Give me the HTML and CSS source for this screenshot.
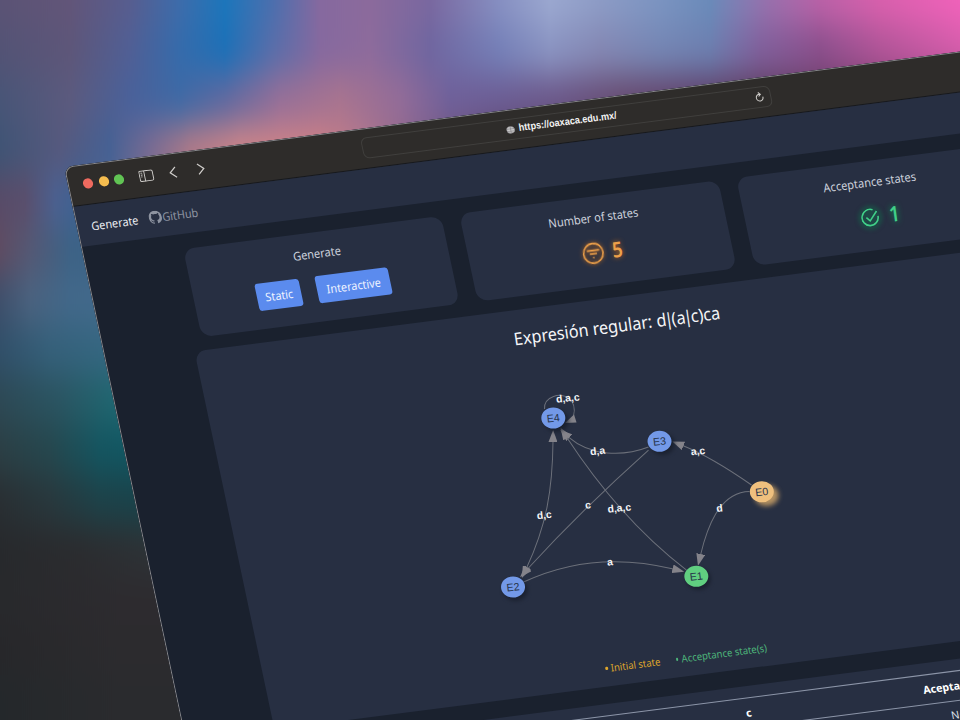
FILE: index.html
```html
<!DOCTYPE html>
<html lang="en">
<head>
<meta charset="utf-8">
<title>Generate</title>
<link rel="stylesheet" href="styles.css">
</head>
<body>
<svg class="filters" width="0" height="0"><filter id="soften" x="0" y="-10%" width="100%" height="120%" color-interpolation-filters="sRGB"><feGaussianBlur stdDeviation="0 17"/></filter></svg>
<div class="backdrop"><i></i><i></i><i></i><i></i><i></i><i></i><i></i><i></i><i></i><i></i><i></i><i></i><i></i><i></i><i></i></div>
<div class="window">
  <header class="chrome">
    <div class="controls">
      <i class="light red"></i><i class="light yellow"></i><i class="light green"></i>
      <svg class="ic-side" width="15" height="12" viewBox="0 0 16 13"><rect x=".6" y=".8" width="14.4" height="11" rx="1.4"/><path d="M6 1v11M2.2 3h1.800M2.200 5h1.800M2.200 7h1.400"/></svg>
      <svg class="ic-back" width="8" height="12" viewBox="0 0 8 12"><path d="M7 .8 1.200 6 7 11.200"/></svg>
      <svg class="ic-fwd" width="8" height="12" viewBox="0 0 8 12"><path d="M1 .8 6.800 6 1 11.200"/></svg>
    </div>
    <div class="address">
      <svg class="ic-lock" width="9" height="8" viewBox="0 0 9 8"><ellipse cx="4.500" cy="4" rx="4" ry="3.400"/><path d="M1 3h7M1 5.300h7M4.500 .5v7"/></svg>
      <span>https://oaxaca.edu.mx/</span>
      <svg class="ic-reload" width="9" height="11" viewBox="0 0 9 11"><path d="M5 2.600A3.300 3.300 0 1 0 7.700 5.200M3.700 .6 5.800 2.600 3.700 4.600"/></svg>
    </div>
  </header>
  <nav class="nav">
    <span class="brand">Generate</span>
    <span class="link"><svg width="13" height="13" viewBox="0 0 16 16"><path d="M8 0C3.580 0 0 3.580 0 8c0 3.540 2.290 6.530 5.470 7.590.4.070.55-.17.55-.38 0-.19-.01-.82-.01-1.490-2.010.37-2.530-.49-2.690-.94-.09-.23-.48-.94-.82-1.130-.28-.15-.68-.52-.01-.53.63-.01 1.080.58 1.230.82.72 1.210 1.870.87 2.330.66.07-.52.28-.87.51-1.070-1.780-.2-3.640-.89-3.640-3.950 0-.87.31-1.590.82-2.150-.08-.2-.36-1.020.08-2.120 0 0 .67-.21 2.200.82.64-.18 1.320-.27 2-.27s1.360.09 2 .27c1.530-1.040 2.200-.82 2.200-.82.44 1.100.16 1.920.08 2.120.51.56.82 1.270.82 2.150 0 3.070-1.870 3.750-3.650 3.950.29.25.54.73.54 1.480 0 1.070-.01 1.930-.01 2.200 0 .21.15.46.55.38A8.010 8.010 0 0 0 16 8c0-4.420-3.580-8-8-8z"/></svg><span>GitHub</span></span>
  </nav>
  <main>
    <section class="cards">
      <div class="card">
        <h2>Generate</h2>
        <div class="actions"><button><span>Static</span></button><button><span>Interactive</span></button></div>
      </div>
      <div class="card">
        <h2>Number of states</h2>
        <div class="stat orange"><svg width="23" height="23" viewBox="0 0 24 24"><circle cx="12" cy="12" r="10.300"/><path d="M5.500 9h13M8.200 12.600h7.600M11.300 16.400h1.400"/></svg><b>5</b></div>
      </div>
      <div class="card">
        <h2>Acceptance states</h2>
        <div class="stat mint"><svg width="19" height="19" viewBox="0 0 20 20"><path d="M18.300 9.300A8.600 8.600 0 1 1 13.400 2.100M5.800 9.600l3.600 3.800L17.400 4"/></svg><b>1</b></div>
      </div>
    </section>
    <section class="graph">
      <h1>Expresión regular: d<span>|</span>(a<span>|</span>c)ca</h1>
      <svg class="diagram" width="836" height="378" viewBox="89 196 836 378">
        <defs>
          <marker id="tip" viewBox="0 0 12 9" refX="1" refY="4.500" markerWidth="12" markerHeight="9" markerUnits="userSpaceOnUse" orient="auto-start-reverse"><path d="M0 0 12 4.500 0 9z"/></marker>
        </defs>
        <g transform="matrix(.97343 .12557 -.20598 .97343 -27.4 -170.500)">
          <g class="edges">
            <path d="M544 409C543 396 561 392 568 398C576 404 574 412 573 416" />
            <path d="M648 447C622 457 590 456 568 437" marker-end="url(#tip)"/>
            <path d="M751 485C728 469 706 455 682 445.500" marker-end="url(#tip)"/>
            <path d="M749 491.500C718 492 706 530 700 555" marker-end="url(#tip)"/>
            <path d="M686 570C644 538 602 492 566 437" marker-end="url(#tip)"/>
            <path d="M648 450C610 484 570 522 527 569" marker-end="url(#tip)"/>
            <path d="M552.500 441C552 490 546 525 526 568" marker-start="url(#tip)" marker-end="url(#tip)"/>
            <path d="M523 582C570 560 620 556 673 569" marker-end="url(#tip)"/>
            <path class="head" d="M564.500 423 573.500 414.500 576 422.500z"/>
          </g>
          <g class="nodes">
            <ellipse class="shade" cx="556" cy="421" rx="12" ry="10.500"/><ellipse class="shade" cx="662" cy="444" rx="12" ry="10.500"/><ellipse class="shade" cx="515" cy="590" rx="12" ry="10.500"/><ellipse class="shade" cx="698" cy="579" rx="12" ry="10.500"/>
            <ellipse class="glow" cx="766" cy="495.500" rx="12" ry="10.500"/>
            <ellipse class="blue" cx="552.800" cy="418" rx="12" ry="10.500"/>
            <ellipse class="blue" cx="659" cy="441.300" rx="12" ry="10.500"/>
            <ellipse class="blue" cx="512.500" cy="587" rx="12" ry="10.500"/>
            <ellipse class="green" cx="695.800" cy="576.300" rx="12" ry="10.500"/>
            <ellipse class="amber" cx="761.300" cy="491.700" rx="12" ry="10.500"/>
          </g>
          <g class="names">
            <g transform="translate(552.800 418)"><text y="3.700">E4</text></g>
            <g transform="translate(659 441.300)"><text y="3.700">E3</text></g>
            <g transform="translate(512.500 587)"><text y="3.700">E2</text></g>
            <g transform="translate(695.800 576.300)"><text y="3.700">E1</text></g>
            <g transform="translate(761.300 491.700)"><text y="3.700">E0</text></g>
          </g>
          <g class="labels">
            <g transform="translate(567.200 398)"><text y="3.500">d,a,c</text></g>
            <g transform="translate(597 451)"><text y="3.500">d,a</text></g>
            <g transform="translate(697.500 451)"><text y="3.500">a,c</text></g>
            <g transform="translate(719 508)"><text y="3.500">d</text></g>
            <g transform="translate(618.700 508)"><text y="3.500">d,a,c</text></g>
            <g transform="translate(587.500 505)"><text y="3.500">c</text></g>
            <g transform="translate(543.700 515)"><text y="3.500">d,c</text></g>
            <g transform="translate(609.300 562)"><text y="3.500">a</text></g>
          </g>
        </g>
      </svg>
      <div class="legend"><span class="initial">Initial state</span><span class="accept">Acceptance state(s)</span></div>
    </section>
    <section class="table">
      <div class="row head-row"><span></span><span></span><span>c</span><span>Aceptación</span></div>
      <div class="row"><span></span><span></span><span></span><span>No</span></div>
    </section>
  </main>
</div>
</body>
</html>
```
FILE: styles.css
```css
* { box-sizing: border-box; }
html, body { margin: 0; width: 960px; height: 720px; overflow: hidden; }
body {
  display: flow-root;
  font-family: "Noto Sans", sans-serif;
  background: #2a2b2e;
}
.filters { position: absolute; }

/* Blurred wallpaper: stacked colour bands, 50px each */
.backdrop {
  position: absolute;
  left: 0;
  top: -75px;
  width: 960px;
  display: flex;
  flex-direction: column;
  filter: url(#soften);
}
.backdrop i { height: 50px; }
.backdrop i:nth-child(1) { height: 100px; background-image: linear-gradient(90deg, #5b5375 0, #625579 70px, #575d8f 130px, #3d6cab 180px, #1c76bb 225px, #4a6fae 272px, #86699f 320px, #8b6a9c 370px, #7a68a0 430px, #8790c2 500px, #9ba8d0 550px, #8d9cc6 600px, #7b94c1 660px, #6a8bba 710px, #9a70ad 770px, #bb62a8 820px, #d960ad 880px, #f062ba 960px); }
.backdrop i:nth-child(2) { background-image: linear-gradient(90deg, #535375 0, #5d5679 70px, #505f95 130px, #356bab 180px, #1d70b7 225px, #556eab 270px, #85699f 320px, #8d6b9c 370px, #6f66a0 430px, #7580b8 500px, #8a94c2 550px, #8488b4 600px, #7586b4 660px, #6d7fb0 710px, #80609c 760px, #8a4f8c 820px, #b05598 880px, #d55dab 960px); }
.backdrop i:nth-child(3) { background-image: linear-gradient(90deg, #485577 0, #5b5a7e 70px, #49619a 130px, #3f69a5 180px, #6069a0 225px, #966f98 280px, #a8748f 340px, #936c98 400px, #6f609a 450px, #6c5d94 500px, #6b5788 560px, #674c72 620px, #60406a 700px, #5c3c5e 760px, #6d3a64 850px, #8a3f74 960px); }
.backdrop i:nth-child(4) { background-image: linear-gradient(90deg, #3f5475 0, #55597e 60px, #456194 110px, #7a6b92 150px, #b07a88 190px, #ce8588 240px, #cc8086 320px, #b4788c 360px, #84628a 420px, #5b3f62 500px, #5b3a58 960px); }
.backdrop i:nth-child(5) { background-image: linear-gradient(90deg, #584b68 0, #5a4e6c 25px, #4b6090 55px, #3d6294 80px, #a07888 200px, #704f70 960px); }
.backdrop i:nth-child(6) { background-image: linear-gradient(90deg, #5f4c62 0, #545874 30px, #3d6285 70px, #3a6386 110px); }
.backdrop i:nth-child(7) { background-image: linear-gradient(90deg, #3f506c 0, #4a627f 30px, #42688a 70px, #426a8c 110px); }
.backdrop i:nth-child(8) { background-image: linear-gradient(90deg, #31506a 0, #35607a 50px, #356680 100px); }
.backdrop i:nth-child(9) { background-image: linear-gradient(90deg, #2d4955 0, #2a5562 60px, #20656f 110px, #1f6b77 140px); }
.backdrop i:nth-child(10) { background-image: linear-gradient(90deg, #2b3f45 0, #25474e 50px, #145560 100px, #0f5763 150px); }
.backdrop i:nth-child(11) { background-image: linear-gradient(90deg, #292f33 0, #28383d 50px, #1d4249 100px, #18434b 150px); }
.backdrop i:nth-child(12) { background-image: linear-gradient(90deg, #27292c 0, #2b2c2f 80px, #2d3236 150px); }
.backdrop i:nth-child(13) { background-image: linear-gradient(90deg, #28292c 0, #2d2b2f 120px); }
.backdrop i:nth-child(14) { background-image: linear-gradient(90deg, #27272a 0, #2c2b2e 120px); }
.backdrop i:nth-child(15) { height: 100px; background-image: linear-gradient(90deg, #24282b 0, #2a2b2e 120px); }

.window {
  position: relative;
  width: 1010px;
  height: 800px;
  margin: 167px 0 0 63.500px;
  border-radius: 9px 9px 0 0;
  overflow: hidden;
  background: #1a212e;
  transform-origin: 0 0;
  transform: matrix(1, -.129, .2116, 1, 0, 0);
}
.window::after {
  content: "";
  position: absolute;
  inset: 0;
  border: 1px solid #86868a;
  border-radius: 9px 9px 0 0;
  pointer-events: none;
}
.chrome {
  height: 40px;
  display: grid;
  grid-template-columns: 294px 409px 1fr;
  align-items: center;
  background: #2e2c2a;
  border-bottom: 1px solid #17191d;
}
.chrome svg { fill: none; stroke: #cfcdca; stroke-width: 1; }
.controls { display: flex; align-items: center; padding: 0 0 1px 15px; }
.light { width: 10px; height: 10px; border-radius: 50%; margin-right: 5.600px; }
.red { background: #ee6a5f; }
.yellow { background: #f5bd4f; }
.green { background: #61c454; }
.ic-side { margin-left: 9px; }
.ic-back { margin-left: 15px; }
.ic-fwd { margin-left: 20px; }
.chrome .ic-back, .chrome .ic-fwd { stroke-width: 1.200; }
.address {
  position: relative;
  height: 21px;
  border: 1px solid #403f3d;
  border-radius: 6px;
  display: flex;
  justify-content: center;
  align-items: center;
  gap: 3px;
  padding-right: 9px;
  font: bold 9.300px/1 "Liberation Sans", sans-serif;
  color: #f2f2f2;
}
.address span { transform: matrix(.975, 0, -.06, 1.08, -.5, 0); }
.chrome .ic-lock { fill: #c9c9c9; stroke: #77767a; stroke-width: .5; }
.ic-reload { position: absolute; right: 6px; top: 4px; }
.nav {
  height: 40px;
  background: #272f42;
  display: flex;
  align-items: center;
  gap: 10px;
  padding-left: 14px;
  font-size: 11px;
}
.brand, .link span, h2, button span { display: inline-block; transform: matrix(.98, 0, -.06, 1.05, 0, 0); }
.brand { color: #eceef2; }
.link { display: flex; align-items: center; color: #8d93a0; }
.link svg { fill: #8d93a0; }
main { padding: 15px 85px 0 89px; }
.cards {
  display: grid;
  grid-template-columns: repeat(3, 258.500px);
  gap: 18px;
  padding: 0 9.500px;
}
.card {
  height: 88px;
  border-radius: 11px;
  background: #272f42;
  display: flex;
  flex-direction: column;
  align-items: center;
  padding-top: 12px;
}
.card h2 { margin: 0 0 0 1px; font-size: 11.200px; line-height: 17px; font-weight: 400; color: #ccd1dc; }
.actions { display: flex; gap: 16px; margin-top: 13.500px; }
button {
  height: 27.500px;
  border: 0;
  border-radius: 3px;
  padding: 0 9px;
  font: 11px "Noto Sans", sans-serif;
  color: #eef3ff;
  background: #5b8bee;
}
button:first-child { padding: 0 8px; }
.stat { height: 24px; margin: 14px 0 0 4px; display: flex; align-items: center; gap: 7px; font-size: 20px; line-height: 24px; }
.stat b { font-weight: 600; transform: matrix(.9, 0, -.08, 1.05, 0, 0); }
.stat svg { fill: none; stroke: currentColor; stroke-width: 1.700; transform: matrix(.98, 0, -.08, .98, 0, 0); }
.orange { color: #eda04a; text-shadow: 0 0 5px #c46a1a; }
.orange svg { filter: drop-shadow(0 0 2px #c46a1a); }
.mint { color: #40cf88; text-shadow: 0 0 6px #0b9a55; margin-left: 8px; gap: 8.500px; }
.mint svg { border-radius: 50%; background: #16614a80; box-shadow: 0 0 4px 3px #16614a80; }
.graph {
  position: relative;
  height: 378px;
  margin-top: 13px;
  border-radius: 11px;
  background: #272f42;
  display: flex;
  flex-direction: column;
  justify-content: space-between;
  align-items: center;
}
h1 { margin: 14px 0 0; font-size: 16.600px; line-height: 26px; font-weight: 400; color: #f5f6f8; transform: matrix(.972, 0, -.07, 1.04, -1.500, 1); }
h1 span { margin: 0 -1.900px; }
.diagram { position: absolute; inset: 0; }
.edges path { fill: none; stroke: #6c707a; stroke-width: 1; }
.edges .head { fill: #84838a; stroke: none; }
marker path { fill: #84838a; stroke: none; }
.edges marker path { stroke: none; }
.blue { fill: #7399e8; }
.green { fill: #60cf80; }
.amber { fill: #efc07e; }
.shade { fill: #161c29; filter: blur(2px); opacity: .8; }
.glow { fill: #d9ab6a; filter: blur(2.500px); opacity: .8; }
.names text, .labels text { text-anchor: middle; font-family: "Liberation Sans", sans-serif; transform: matrix(1, -.11, .12, 1, 0, 0); }
.names text { font-size: 10.600px; fill: #26334a; }
.labels text { font-size: 10.300px; font-weight: 700; fill: #f4f5f7; }
.legend { display: flex; gap: 16px; padding: 0 0 9px; margin-left: -5px; font-size: 9.600px; line-height: 16px; transform: matrix(.985, 0, -.06, 1.05, 0, 0); }
.legend span::before { content: ""; display: inline-block; width: 2.600px; height: 2.600px; border-radius: 50%; background: currentColor; margin-right: 3px; vertical-align: 2px; }
.initial { color: #dda52c; }
.accept { color: #4db57a; }
.table { margin-top: 17px; height: 200px; padding-top: 11px; border-radius: 11px 11px 0 0; background: #272f42; font-size: 10.600px; }
.row { height: 28.500px; display: grid; grid-template-columns: 150px 225px 180px 281px; align-items: center; text-align: center; border-top: 1px solid #8c95a8; color: #dfe3ea; }
.head-row { font-weight: 700; color: #fff; }
.row span:last-child { padding-right: 53px; }
```
